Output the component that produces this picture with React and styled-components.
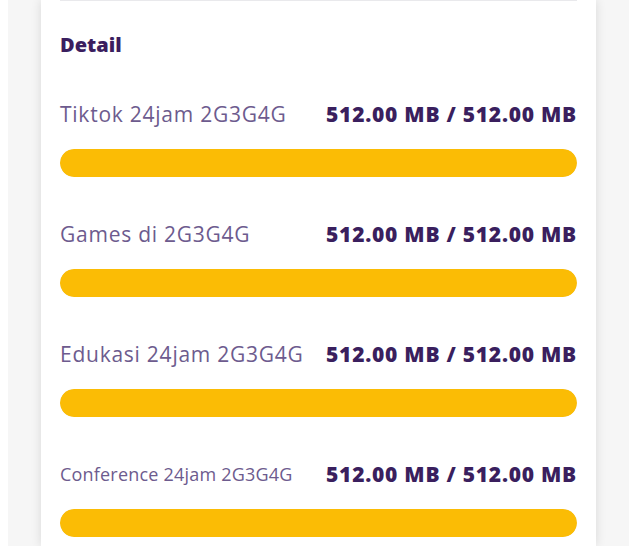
import React from 'react';
import styled, { createGlobalStyle } from 'styled-components';

const GlobalStyle = createGlobalStyle`
    html, body {
        margin: 0;
        padding: 0;
        background: #ffffff;
    }
    body {
        font-family: "Open Sans", "Noto Sans", sans-serif;
    }
`;

const Page = styled.div`
    margin-left: 8px;
    width: 621px;
    height: 546px;
    overflow: hidden;
    background: #f6f6f6;
    padding: 0 33px;
    box-sizing: border-box;
`;

const Card = styled.div`
    background: #ffffff;
    height: 100%;
    padding: 0 19px 0 19px;
    box-shadow: 0 0 10px rgba(0, 0, 0, 0.12);
`;

const Divider = styled.div`
    height: 1px;
    background: #e9e9ec;
`;

const Title = styled.h2`
    margin: 32px 0 0;
    font-size: 20px;
    line-height: 24px;
    font-weight: 800;
    color: #3b1e5f;
`;

const Row = styled.div`
    margin-top: 45px;
`;

const RowHead = styled.div`
    display: flex;
    justify-content: space-between;
    align-items: center;
    height: 24px;
`;

const Label = styled.span`
    font-size: ${props => props.small ? '18px' : '21px'};
    letter-spacing: ${props => props.small ? '0.2px' : '0.75px'};
    color: #6d5b8e;
    white-space: nowrap;
`;

const Value = styled.span`
    font-size: 21px;
    font-weight: 800;
    color: #3a1f5e;
    letter-spacing: 0.75px;
    white-space: nowrap;
`;

const Track = styled.div`
    margin-top: 23px;
    height: 28px;
    border-radius: 14px;
    background: #eeeeee;
    overflow: hidden;
`;

const Fill = styled.div`
    height: 100%;
    border-radius: 14px;
    background: #fbbc05;
`;

const quotas = [
    { name: 'Tiktok 24jam 2G3G4G', used: 512, total: 512 },
    { name: 'Games di 2G3G4G', used: 512, total: 512 },
    { name: 'Edukasi 24jam 2G3G4G', used: 512, total: 512 },
    { name: 'Conference 24jam 2G3G4G', used: 512, total: 512, small: true },
];

export default function App() {
    return (
        <>
            <GlobalStyle />
            <Page>
                <Card>
                    <Divider />
                    <Title>Detail</Title>
                    {quotas.map(q => (
                        <Row key={q.name}>
                            <RowHead>
                                <Label small={q.small}>{q.name}</Label>
                                <Value>{q.used.toFixed(2)} MB / {q.total.toFixed(2)} MB</Value>
                            </RowHead>
                            <Track>
                                <Fill style={{ width: `${(q.used / q.total) * 100}%` }} />
                            </Track>
                        </Row>
                    ))}
                </Card>
            </Page>
        </>
    );
}
